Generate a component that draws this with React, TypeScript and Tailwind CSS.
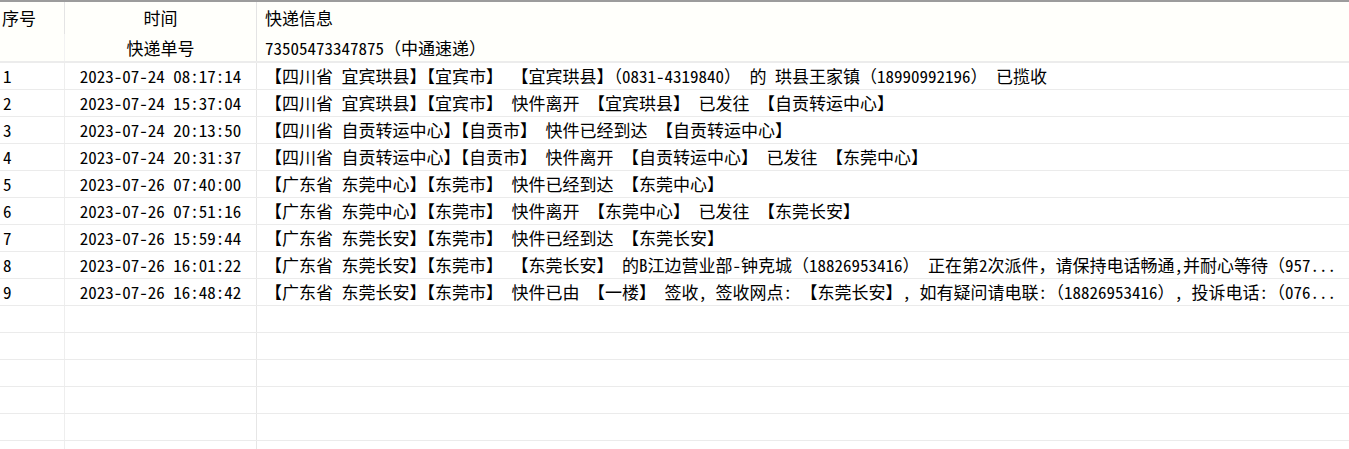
const rows = [
  ["1", "2023-07-24 08:17:14", "【四川省 宜宾珙县】【宜宾市】 【宜宾珙县】（0831-4319840） 的 珙县王家镇（18990992196） 已揽收"],
  ["2", "2023-07-24 15:37:04", "【四川省 宜宾珙县】【宜宾市】 快件离开 【宜宾珙县】 已发往 【自贡转运中心】"],
  ["3", "2023-07-24 20:13:50", "【四川省 自贡转运中心】【自贡市】 快件已经到达 【自贡转运中心】"],
  ["4", "2023-07-24 20:31:37", "【四川省 自贡转运中心】【自贡市】 快件离开 【自贡转运中心】 已发往 【东莞中心】"],
  ["5", "2023-07-26 07:40:00", "【广东省 东莞中心】【东莞市】 快件已经到达 【东莞中心】"],
  ["6", "2023-07-26 07:51:16", "【广东省 东莞中心】【东莞市】 快件离开 【东莞中心】 已发往 【东莞长安】"],
  ["7", "2023-07-26 15:59:44", "【广东省 东莞长安】【东莞市】 快件已经到达 【东莞长安】"],
  ["8", "2023-07-26 16:01:22", "【广东省 东莞长安】【东莞市】 【东莞长安】 的B江边营业部-钟克城（18826953416） 正在第2次派件，请保持电话畅通,并耐心等待（957..."],
  ["9", "2023-07-26 16:48:42", "【广东省 东莞长安】【东莞市】 快件已由 【一楼】 签收, 签收网点: 【东莞长安】, 如有疑问请电联:（18826953416）, 投诉电话:（076..."],
];

const emptyRows = 6;

export default function App() {
  return (
    <div
      className="w-full h-[449px] overflow-hidden bg-white text-[17px] text-black border-t-2 border-[#9c9c9c]"
      style={{ fontFamily: '"Noto Sans Mono CJK SC", "Noto Sans CJK SC", monospace' }}
    >
      {/* header */}
      <div className="bg-[#fffffb] border-b-2 border-[#ececec]">
        <div className="flex h-[32px]">
          <div className="w-[65px] border-r border-[#e4e4e4] flex items-center pl-[2px]">序号</div>
          <div className="w-[192px] border-r border-[#e4e4e4] flex items-center justify-center">时间</div>
          <div className="flex-1 flex items-center pl-[8px]">快递信息</div>
        </div>
        <div className="flex h-[27px]">
          <div className="w-[65px] border-r border-[#f2f2f2]"></div>
          <div className="w-[192px] border-r border-[#e4e4e4] flex items-center justify-center">快递单号</div>
          <div className="flex-1 flex items-center pl-[8px] whitespace-nowrap">73505473347875（中通速递）</div>
        </div>
      </div>

      {/* data rows */}
      {rows.map((r) => (
        <div key={r[0]} className="flex h-[27px] border-b border-[#ebebeb]">
          <div className="w-[65px] border-r border-[#eeeeee] flex items-center pl-[3px]">{r[0]}</div>
          <div className="w-[192px] border-r border-[#e6e6e6] flex items-center justify-center">{r[1]}</div>
          <div className="flex-1 min-w-0 flex items-center pl-[8px] whitespace-nowrap overflow-hidden">{r[2]}</div>
        </div>
      ))}

      {Array.from({ length: emptyRows }).map((_, i) => (
        <div key={i} className="flex h-[27px] border-b border-[#ebebeb]">
          <div className="w-[65px] border-r border-[#eeeeee]"></div>
          <div className="w-[192px] border-r border-[#e6e6e6]"></div>
          <div className="flex-1"></div>
        </div>
      ))}
    </div>
  );
}
